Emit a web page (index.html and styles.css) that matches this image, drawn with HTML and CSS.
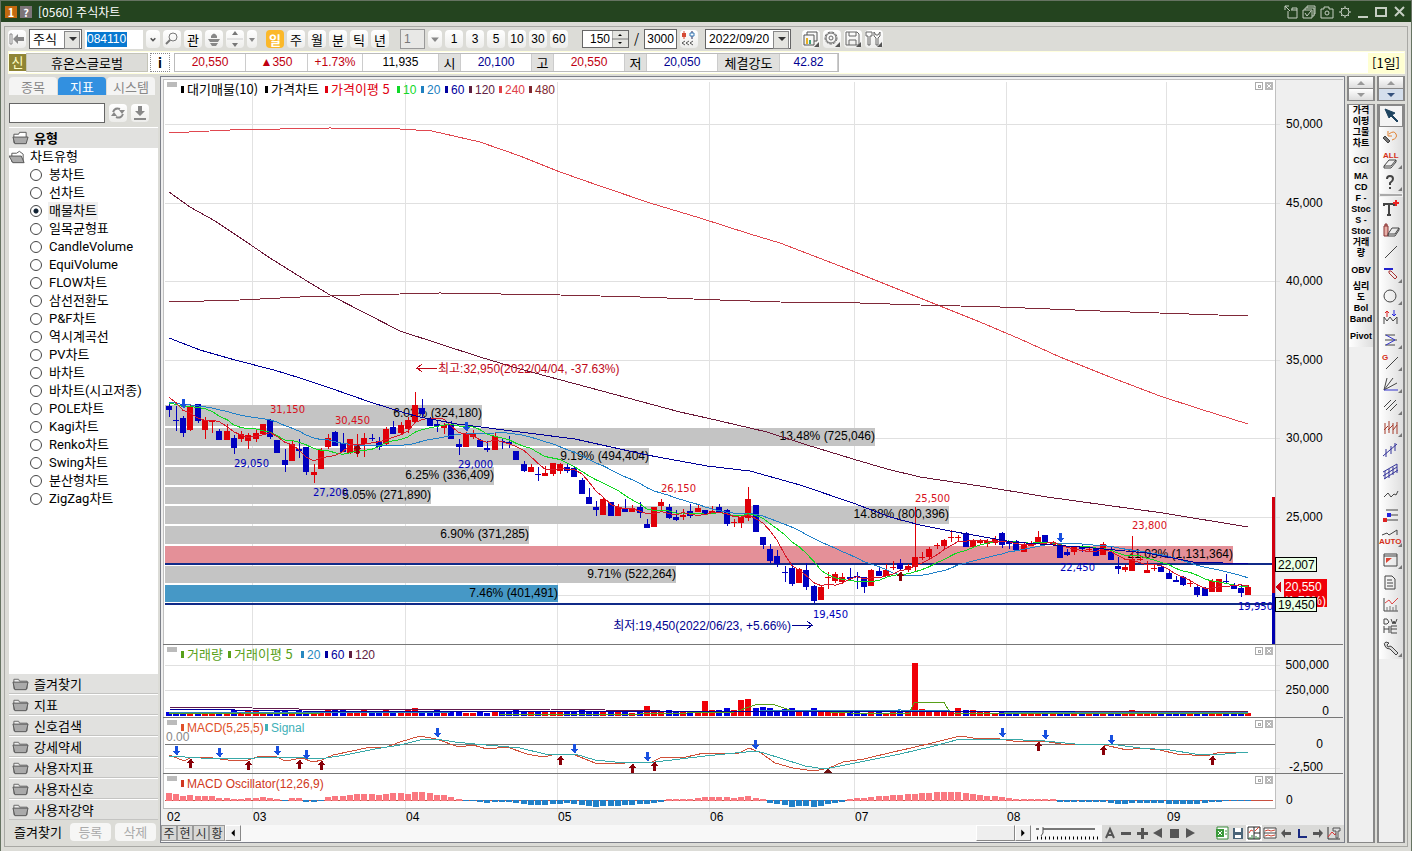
FILE: index.html
```html
<!DOCTYPE html>
<html lang="ko">
<head>
    <meta charset="UTF-8">
    <meta name="viewport" content="width=device-width, initial-scale=1.0">
    <title>[0560] 주식차트</title>
    <link rel="stylesheet" href="styles.css">
</head>
<body>
    <header class="titlebar">
        <span class="badge orange">1</span>
        <span class="badge gray">?</span>
        <h1>[0560] 주식차트</h1>
        <div class="window-icons">
            <svg viewBox="0 0 16 16"><path d="M5 7v7h9V6H8M9 6V4h5v2M2 2l5 5M2 6V2h4"/></svg>
            <svg viewBox="0 0 16 16"><path d="M2 6h9v8H2zM4 6V4h9v8h-2M6 4V2h8v8h-1M4 9l2 3 4-5"/></svg>
            <svg viewBox="0 0 16 16"><path d="M2 5h3V3h5v2h4v9H2z"/><circle cx="8" cy="9" r="2"/></svg>
            <svg viewBox="0 0 16 16"><circle cx="8" cy="8" r="4"/><path d="M8 2v2M8 12v2M2 8h2M12 8h2M4 4l1 1M11 11l1 1M4 12l1-1M11 5l1-1"/></svg>
            <svg viewBox="0 0 16 16" class="thick"><path d="M3 13h10"/></svg>
            <svg viewBox="0 0 16 16" class="thick"><path d="M3 4h10v8H3z"/></svg>
            <svg viewBox="0 0 16 16" class="thick"><path d="M4 3l9 9M13 3l-9 9"/></svg>
        </div>
    </header>

    <div class="window">
        <div class="toolbar">
            <button class="tool" aria-label="처음"><svg viewBox="0 0 18 18"><path d="M2 4h2v10H2z" fill="#fff" stroke="#888"/><path d="M5 9l5-5v3h6v4h-6v3z" fill="#888"/></svg></button>
            <span class="drop market"><select aria-label="시장"><option>주식</option></select></span>
            <span class="code"><input type="text" value="084110" aria-label="종목코드"></span>
            <button class="tool narrow" aria-label="목록"><svg viewBox="0 0 18 18"><path d="M6 8l3 3 3-3" fill="none" stroke="#555" stroke-width="2"/></svg></button>
            <button class="tool" aria-label="검색"><svg viewBox="0 0 18 18"><circle cx="10" cy="7" r="4" fill="none" stroke="#777"/><path d="M7 10l-4 4" stroke="#777" stroke-width="2"/></svg></button>
            <button class="tool">관</button>
            <button class="tool" aria-label="알림"><svg viewBox="0 0 18 18"><path d="M6 6q3-5 6 0v2H6zM3 9h12l-2 3H5zM5 13h8l-2 3H7z" fill="#888"/></svg></button>
            <button class="tool" aria-label="이동"><svg viewBox="0 0 18 18"><path d="M6 5l3-4 3 4zM6 13l3 4 3-4z" fill="#777"/><path d="M1 9h16" stroke="#ccc"/></svg></button>
            <button class="tool tiny" aria-label="더보기"><svg viewBox="0 0 10 18"><path d="M2 8h6l-3 4z" fill="#888"/></svg></button>
            <div class="periods">
                <button class="tool on">일</button>
                <button class="tool">주</button>
                <button class="tool">월</button>
                <button class="tool">분</button>
                <button class="tool">틱</button>
                <button class="tool">년</button>
            </div>
            <input class="unit" type="text" value="1" aria-label="단위" disabled>
            <button class="tool narrow" aria-label="단위 선택"><svg viewBox="0 0 18 18"><path d="M4 7h10l-5 6z" fill="#888"/></svg></button>
            <div class="minutes">
                <button class="tool">1</button>
                <button class="tool">3</button>
                <button class="tool">5</button>
                <button class="tool">10</button>
                <button class="tool">30</button>
                <button class="tool">60</button>
            </div>
            <span class="spin"><input type="text" value="150" aria-label="표시 개수"><svg viewBox="0 0 16 16"><path d="M0 0h16v16H0z" fill="#e4e4e0"/><path d="M0 8h16M0 0v16" stroke="#777"/><path d="M6 5h4l-2-2zM6 11h4l-2 2z" fill="#000"/></svg></span>
            <span class="slash">/</span>
            <input class="total" type="text" value="3000" aria-label="전체 개수">
            <button class="tool" aria-label="봉"><svg viewBox="0 0 18 18"><path d="M4 1v8M12 1v8" stroke="#d54a35"/><path d="M2 3h4v4H2z" fill="#d54a35"/><path d="M12 1v8" stroke="#3578b5"/><path d="M10 3h4v3h-4z" fill="#fff" stroke="#3578b5"/><path d="M5 11l-3 2 3 2M9 11l-3 2 3 2M13 11l-3 2 3 2" fill="none" stroke="#555"/></svg></button>
            <span class="drop date"><select aria-label="날짜"><option>2022/09/20</option></select></span>
            <div class="tools">
                <button class="tool" aria-label="차트 추가"><svg viewBox="0 0 18 18" fill="none" stroke="#555"><path d="M5 5V2h10v9h-3M2 5h10v10H2z"/><path d="M5 8v6" stroke="#e8b020" stroke-width="2"/><path d="M8 10v4" stroke="#40a080" stroke-width="2"/><path d="M17 12v5h-5z" fill="#555" stroke="none"/></svg></button>
                <button class="tool" aria-label="설정"><svg viewBox="0 0 18 18" fill="none" stroke="#666"><circle cx="8" cy="8" r="6" stroke-dasharray="3 1"/><circle cx="8" cy="8" r="5"/><circle cx="8" cy="8" r="2"/><path d="M17 12v5h-5z" fill="#555" stroke="none"/></svg></button>
                <button class="tool" aria-label="저장"><svg viewBox="0 0 18 18" fill="none" stroke="#666"><path d="M2 2h11l2 2v11H2zM5 2v4h7V2M5 15v-5h7v5"/><path d="M17 12v5h-5z" fill="#555" stroke="none"/></svg></button>
                <button class="tool" aria-label="도구"><svg viewBox="0 0 18 18" fill="none" stroke="#666"><path d="M1 2h6v4H5v9H3V6H1zM9 2v4l2 2v7h2V8l2-2V2l-2 3h-2z"/><path d="M17 12v5h-5z" fill="#555" stroke="none"/></svg></button>
            </div>
        </div>

        <div class="quote">
            <span class="new">신</span>
            <button class="name">휴온스글로벌</button>
            <button class="info">i</button>
            <dl class="prices">
                <dd class="red w70">20,550</dd>
                <dd class="red w62">▲350</dd>
                <dd class="red w54">+1.73%</dd>
                <dd class="w76">11,935</dd>
                <dt class="w21">시</dt>
                <dd class="blue w70">20,100</dd>
                <dt class="w21">고</dt>
                <dd class="red w70">20,550</dd>
                <dt class="w21">저</dt>
                <dd class="blue w70">20,050</dd>
                <dt class="w62">체결강도</dt>
                <dd class="blue w59">42.82</dd>
            </dl>
            <span class="daily">[1일]</span>
        </div>

        <main class="main">
            <aside class="sidebar">
                <nav class="tabs">
                    <button>종목</button>
                    <button class="active">지표</button>
                    <button>시스템</button>
                </nav>
                <div class="find">
                    <input type="text" aria-label="지표 검색">
                    <button class="tool" aria-label="새로고침"><svg viewBox="0 0 18 18" fill="none" stroke="#888" stroke-width="2"><path d="M4 8q2-5 7-3M14 10q-2 5-7 3"/><path d="M10 6h6l-3 4zM8 12H2l3-4z" fill="#888" stroke="none"/></svg></button>
                    <button class="tool" aria-label="내려받기"><svg viewBox="0 0 18 18"><path d="M7 2h4v5h3l-5 5-5-5h3zM3 14h12v2H3z" fill="#888"/></svg></button>
                </div>
                <h2 class="group"><svg class="folder" viewBox="0 0 18 14"><path d="M2 12V3h5l1-2h7v11z" fill="#fff" stroke="#555"/><path d="M1 6h16l-2 7H3z" fill="#aaa" stroke="#555"/></svg>유형</h2>
                <div class="list">
                    <div class="root"><svg class="folder" viewBox="0 0 18 14"><path d="M3 12V3h5l3-2 4 3v8z" fill="#fff" stroke="#555"/><path d="M0 6h13l3 7H4z" fill="#aaa" stroke="#555"/></svg>차트유형</div>
                    <label><input type="radio" name="type"><span>봉차트</span></label>
                    <label><input type="radio" name="type"><span>선차트</span></label>
                    <label><input type="radio" name="type" checked><span>매물차트</span></label>
                    <label><input type="radio" name="type"><span>일목균형표</span></label>
                    <label><input type="radio" name="type"><span>CandleVolume</span></label>
                    <label><input type="radio" name="type"><span>EquiVolume</span></label>
                    <label><input type="radio" name="type"><span>FLOW차트</span></label>
                    <label><input type="radio" name="type"><span>삼선전환도</span></label>
                    <label><input type="radio" name="type"><span>P&amp;F차트</span></label>
                    <label><input type="radio" name="type"><span>역시계곡선</span></label>
                    <label><input type="radio" name="type"><span>PV차트</span></label>
                    <label><input type="radio" name="type"><span>바차트</span></label>
                    <label><input type="radio" name="type"><span>바차트(시고저종)</span></label>
                    <label><input type="radio" name="type"><span>POLE차트</span></label>
                    <label><input type="radio" name="type"><span>Kagi차트</span></label>
                    <label><input type="radio" name="type"><span>Renko차트</span></label>
                    <label><input type="radio" name="type"><span>Swing차트</span></label>
                    <label><input type="radio" name="type"><span>분산형차트</span></label>
                    <label><input type="radio" name="type"><span>ZigZag차트</span></label>
                </div>
                <div class="folders">
                    <button><svg class="folder" viewBox="0 0 18 14"><path d="M2 12V2h5l1 2h8v8z" fill="#eee" stroke="#666"/><path d="M1 5h16l-2 8H3z" fill="#aaa" stroke="#555"/></svg>즐겨찾기</button>
                    <button><svg class="folder" viewBox="0 0 18 14"><path d="M2 12V2h5l1 2h8v8z" fill="#eee" stroke="#666"/><path d="M1 5h16l-2 8H3z" fill="#aaa" stroke="#555"/></svg>지표</button>
                    <button><svg class="folder" viewBox="0 0 18 14"><path d="M2 12V2h5l1 2h8v8z" fill="#eee" stroke="#666"/><path d="M1 5h16l-2 8H3z" fill="#aaa" stroke="#555"/></svg>신호검색</button>
                    <button><svg class="folder" viewBox="0 0 18 14"><path d="M2 12V2h5l1 2h8v8z" fill="#eee" stroke="#666"/><path d="M1 5h16l-2 8H3z" fill="#aaa" stroke="#555"/></svg>강세약세</button>
                    <button><svg class="folder" viewBox="0 0 18 14"><path d="M2 12V2h5l1 2h8v8z" fill="#eee" stroke="#666"/><path d="M1 5h16l-2 8H3z" fill="#aaa" stroke="#555"/></svg>사용자지표</button>
                    <button><svg class="folder" viewBox="0 0 18 14"><path d="M2 12V2h5l1 2h8v8z" fill="#eee" stroke="#666"/><path d="M1 5h16l-2 8H3z" fill="#aaa" stroke="#555"/></svg>사용자신호</button>
                    <button><svg class="folder" viewBox="0 0 18 14"><path d="M2 12V2h5l1 2h8v8z" fill="#eee" stroke="#666"/><path d="M1 5h16l-2 8H3z" fill="#aaa" stroke="#555"/></svg>사용자강약</button>
                </div>
                <div class="favorites">
                    <span>즐겨찾기</span>
                    <button disabled>등록</button>
                    <button disabled>삭제</button>
                </div>
            </aside>

            <section class="chart-panel">
                <svg id="chart" viewBox="161 77 1183 748"></svg>
                <div class="chart-footer">
                    <div class="modes">
                        <button>주</button><button>현</button><button>시</button><button>황</button><button class="arrow" aria-label="왼쪽"><svg viewBox="0 0 16 16"><path d="M10 4v8L6 8z"/></svg></button>
                    </div>
                    <div class="track"><span class="thumb"></span></div>
                    <button class="arrow" aria-label="오른쪽"><svg viewBox="0 0 16 16"><path d="M6 4v8l4-4z"/></svg></button>
                    <svg class="scale" viewBox="0 0 64 16"><path d="M1 4h3M8 4h52" stroke="#777" stroke-width="2"/><path d="M8 2v6l-2 3" stroke="#555" fill="none"/><path d="M2 13h61" stroke="#000" stroke-width="3" stroke-dasharray="1 3"/></svg>
                    <div class="controls">
                        <button aria-label="글자"><svg viewBox="0 0 16 16"><path d="M4 13l4-9 4 9M6 10h4" fill="none" stroke="#555" stroke-width="2"/></svg></button>
                        <button aria-label="축소"><svg viewBox="0 0 16 16"><path d="M3 7h10v3H3z"/></svg></button>
                        <button aria-label="확대"><svg viewBox="0 0 16 16"><path d="M3 7h4V3h3v4h4v3h-4v4H7v-4H3z"/></svg></button>
                        <button aria-label="뒤로"><svg viewBox="0 0 16 16"><path d="M12 3v10L3 8z"/></svg></button>
                        <button aria-label="정지"><svg viewBox="0 0 16 16"><path d="M4 4h9v9H4z"/></svg></button>
                        <button aria-label="재생"><svg viewBox="0 0 16 16"><path d="M4 3v10l9-5z"/></svg></button>
                    </div>
                    <div class="controls end">
                        <button aria-label="엑셀"><svg viewBox="0 0 16 16"><path d="M3 2h11v12H3z" fill="#fff" stroke="#3a8a3a"/><path d="M2 4h8v8H2z" fill="#3a9a3a"/><path d="M4 6l4 4M8 6l-4 4" stroke="#fff"/><path d="M11 6h2M11 9h2" stroke="#3a8a3a"/></svg></button>
                        <button aria-label="저장"><svg viewBox="0 0 16 16"><path d="M3 3h10v11H3z" fill="#4a6478"/><path d="M5 3h6v4H5zM5 10h6v3H5z" fill="#fff"/></svg></button>
                        <button class="pressed" aria-label="차트"><svg viewBox="0 0 16 16" fill="none"><path d="M2 2h12v12H2zM8 2v12M8 8h6" stroke="#222"/><path d="M3 8l2-3 2 1M9 6l4-4" stroke="#d43"/><path d="M4 12v2M6 10v4M10 11v3M12 12v2" stroke="#297a35"/></svg></button>
                        <button aria-label="분할"><svg viewBox="0 0 16 16"><path d="M2 3h12v10H2zM2 8h12" fill="#fff" stroke="#444"/><path d="M3 6l3-1 3 1 4-1M3 11l3-1 3 1 4-1" fill="none" stroke="#c43"/></svg></button>
                        <button aria-label="이전"><svg viewBox="0 0 16 16"><path d="M3 8l4-4v3h6v3H7v3z"/></svg></button>
                        <button aria-label="로그"><svg viewBox="0 0 16 16"><path d="M5 4v8h8" fill="none" stroke="#1a2a80" stroke-width="2"/></svg></button>
                        <button aria-label="다음"><svg viewBox="0 0 16 16"><path d="M13 8L9 4v3H3v3h6v3z"/></svg></button>
                        <button aria-label="도구"><svg viewBox="0 0 16 16"><path d="M2 2v12h12" fill="none" stroke="#333"/><path d="M2 12l4-5 3 3 4-7" fill="none" stroke="#d33"/><path d="M7 3h7v3h-2v7h-2V6H7z" fill="#ddd" stroke="#555"/></svg></button>
                    </div>
                </div>
            </section>

            <aside class="strip">
                <div class="pager"><button aria-label="위"><svg viewBox="0 0 24 10"><path d="M8 7h8l-4-4z"/></svg></button><button aria-label="아래"><svg viewBox="0 0 24 10"><path d="M8 3h8l-4 4z"/></svg></button></div>
                <div class="shelf names">
                    <button>가격<br>이평</button>
                    <button>그물<br>차트</button>
                    <button>CCI</button>
                    <button>MA<br>CD</button>
                    <button>F -<br>Stoc</button>
                    <button>S -<br>Stoc</button>
                    <button>거래<br>량</button>
                    <button>OBV</button>
                    <button>심리<br>도</button>
                    <button>Bol<br>Band</button>
                    <button>Pivot</button>
                </div>
            </aside>

            <aside class="strip">
                <div class="pager"><button aria-label="위"><svg viewBox="0 0 24 10"><path d="M8 7h8l-4-4z"/></svg></button><button class="blue-arrow" aria-label="아래"><svg viewBox="0 0 24 10"><path d="M8 3h8l-4 4z"/></svg></button></div>
                <div class="shelf icons">
                    <button class="current" aria-label="선택"><svg viewBox="0 0 24 20"><path d="M5 3l4 9 2-2 6 6 1-1-6-6 3-2z" fill="#1f4460" stroke="#1f4460"/></svg></button>
                    <button aria-label="되돌리기"><svg viewBox="0 0 24 20"><path d="M10 6q5-4 7 0t-4 6M9 3v5h4" stroke="#e08030"/><path d="M4 10l5 5 2-2-5-5z" fill="#777" stroke="#444"/></svg></button>
                    <button class="more" aria-label="모두 지우기"><svg viewBox="0 0 24 20"><text x="4" y="8">ALL</text><path d="M5 16l5-6h7l-5 6zM5 16v2h7l5-6v-2"/></svg></button>
                    <button class="more" aria-label="도움말"><svg viewBox="0 0 24 20"><path d="M8 7q0-3 3-3t3 3q0 2-3 4v2M11 15v2" stroke-width="2"/></svg></button>
                    <hr>
                    <button aria-label="글자"><svg viewBox="0 0 24 20"><path d="M5 8V6h10v2M10 6v11M8 17h4" stroke-width="2"/><path d="M17 2v6M14 5h6" stroke="#e22" stroke-width="2"/></svg></button>
                    <button aria-label="지우개"><svg viewBox="0 0 24 20"><path d="M5 6h4v10H5zM6 6V4h2v2" fill="#e8b0a8" stroke="#833"/><path d="M9 14l4-6h7l-4 6zM9 14v2h7l4-6V8"/></svg></button>
                    <button aria-label="직선"><svg viewBox="0 0 24 20"><path d="M6 16L18 4"/></svg></button>
                    <button class="more" aria-label="수평선"><svg viewBox="0 0 24 20"><path d="M5 5h9" stroke="#22c" stroke-width="2"/><path d="M12 7l6 6M10 9l6 6M10 9V7h2M16 15l2-2" stroke="#a33"/></svg></button>
                    <button class="more" aria-label="원"><svg viewBox="0 0 24 20"><circle cx="11" cy="10" r="6"/></svg></button>
                    <button aria-label="고저"><svg viewBox="0 0 24 20"><path d="M5 16V9l3 4 3-4 3 4 4-4v7"/><path d="M8 9V3M6 5l2-2 2 2" stroke="#d22"/><path d="M15 2v6M13 6l2 2 2-2" stroke="#22d"/></svg></button>
                    <button class="more" aria-label="추세"><svg viewBox="0 0 24 20"><path d="M6 5h10M6 10h12M6 15h10"/><path d="M7 5l9 5-9 5" stroke="#33c"/></svg></button>
                    <button class="more" aria-label="각도"><svg viewBox="0 0 24 20"><text x="3" y="8">G</text><path d="M7 17L19 5"/></svg></button>
                    <button class="more" aria-label="부채"><svg viewBox="0 0 24 20"><path d="M5 16L8 4M5 16L14 4M5 16L18 9"/><path d="M5 16h14" stroke="#33c"/></svg></button>
                    <button class="more" aria-label="평행"><svg viewBox="0 0 24 20"><path d="M5 11l7-7M7 14L17 4M11 15l7-7"/></svg></button>
                    <button class="more" aria-label="주기"><svg viewBox="0 0 24 20"><path d="M6 5v11M10 3v12M14 5v11M18 4v12M5 12l4-4M9 12l5-5M14 12l4-5" stroke="#a43a2a"/></svg></button>
                    <button aria-label="채널"><svg viewBox="0 0 24 20"><path d="M4 16L18 4M7 9v8M12 6v8M16 3v8" stroke="#339"/></svg></button>
                    <button aria-label="이중 채널"><svg viewBox="0 0 24 20"><path d="M4 10L18 2M4 14L18 5M5 17L19 8M6 9v8M10 7v9M14 5v8M18 2v9" stroke="#339"/></svg></button>
                    <button aria-label="파동"><svg viewBox="0 0 24 20"><path d="M5 13l4-4 3 4 3-3 2 1 2-4"/></svg></button>
                    <button aria-label="구간"><svg viewBox="0 0 24 20"><path d="M7 4h12M12 9h7M7 14h12"/><path d="M8 7h4v4H8z" fill="#22d" stroke="none"/><path d="M4 12h4v4H4z" fill="#d22" stroke="none"/></svg></button>
                    <button class="more" aria-label="자동"><svg viewBox="0 0 24 20"><path d="M3 7l5-2 2 2 8-5v5"/><text x="0" y="16">AUTO</text></svg></button>
                    <button class="more" aria-label="창"><svg viewBox="0 0 24 20"><path d="M5 4h13v12H5zM5 6h13"/><path d="M7 8h6l-6 5z" fill="#d43" stroke="none"/></svg></button>
                    <button aria-label="문서"><svg viewBox="0 0 24 20"><path d="M6 4h7l3 3v10H6zM8 8h5M8 11h6M8 14h6"/></svg></button>
                    <button aria-label="통계"><svg viewBox="0 0 24 20"><path d="M5 4v13h14"/><path d="M6 9l4-3 3 4 6-6" stroke="#d44"/><path d="M8 17v-4M11 17v-5M14 17v-4M17 17v-6" stroke="#777"/></svg></button>
                    <button aria-label="주기 변환"><svg viewBox="0 0 24 20"><path d="M5 3v5h3l2-2-2-3zM12 3l2 5 1-3 1 3 2-5M5 10v7M10 10v7M5 13h5M12 10h6M12 10v7h6M12 13h6"/></svg></button>
                    <button class="more" aria-label="환경"><svg viewBox="0 0 24 20"><path d="M6 8q-2-3 1-4l3 1-2 2 1 2 2-1 2 1 6 6-2 2-6-6q-4 0-5-3z" fill="#ddd"/></svg></button>
                </div>
            </aside>
        </main>
    </div>
    <script src="script.js"></script>
</body>
</html>
```
FILE: styles.css
```css
* {
    margin: 0;
    padding: 0;
    box-sizing: border-box;
}

body {
    min-height: 100vh;
    display: flex;
    flex-direction: column;
    background: #dcdcd7;
    border: 1px solid #667362;
    border-bottom: 2px solid #6c6c6a;
    font: 13px/16px "Noto Sans CJK KR", sans-serif;
    color: #000;
}

button, input, select {
    font: inherit;
    color: inherit;
    border: none;
    border-radius: 0;
    background: none;
}

svg {
    display: block;
    overflow: hidden;
}

/* numbers are set a little tighter than the labels */
.code input, .unit, .spin input, .total, .date select, .minutes .tool, .prices dd {
    font-family: "Liberation Sans", "Noto Sans CJK KR", sans-serif;
    font-size: 12px;
}

/* title bar */
.titlebar {
    height: 21px;
    display: flex;
    align-items: center;
    gap: 3px;
    padding: 0 4px;
    background: #24441f;
    color: #fff;
}

.titlebar h1 {
    font-size: 12px;
    font-weight: normal;
    padding-left: 3px;
}

.badge {
    width: 12px;
    height: 12px;
    line-height: 12px;
    font-size: 11px;
    font-weight: bold;
    text-align: center;
}

.orange { background: #c36a10; }
.gray { background: #7c7478; }

.window-icons {
    display: flex;
    gap: 2px;
    margin-left: auto;
}

.window-icons svg {
    width: 16px;
    height: 16px;
    fill: none;
    stroke: #c5cec2;
}

.window-icons .thick { stroke-width: 2; }

.window {
    flex: 1;
    display: flex;
    flex-direction: column;
    margin: 4px 3px;
    border: 1px solid #a8a8a4;
}

/* toolbar */
.toolbar {
    height: 24px;
    display: flex;
    align-items: center;
    gap: 3px;
    padding: 0 3px;
}

.tool {
    flex: none;
    width: 18px;
    height: 18px;
    line-height: 17px;
    text-align: center;
    background: linear-gradient(#fff, #ededeb);
    border-radius: 4px;
}

.tool svg {
    width: 100%;
    height: 18px;
}

.tool.narrow { width: 14px; }
.tool.tiny { width: 10px; }

.tool.on {
    background: #fbb829;
    color: #fff;
    font-weight: bold;
}

.drop {
    position: relative;
    height: 20px;
    background: #fff;
    border: 1px solid #666;
}

.drop select {
    appearance: none;
    display: block;
    width: 100%;
    height: 18px;
    padding-left: 3px;
}

.drop::before {
    content: "";
    position: absolute;
    right: 1px;
    top: 1px;
    width: 14px;
    height: 16px;
    background: #e4e4e0;
    border: 1px solid #888;
    pointer-events: none;
}

.drop::after {
    content: "";
    position: absolute;
    right: 4px;
    top: 7px;
    border: 4px solid transparent;
    border-top-color: #333;
    border-bottom: none;
    pointer-events: none;
}

.market { width: 53px; }
.date { width: 86px; margin-left: 4px; }

.code {
    width: 58px;
    height: 19px;
    padding: 2px;
    background: #fff;
}

.code input {
    display: block;
    width: 40px;
    height: 15px;
    background: #0878d0;
    color: #fff;
}

.periods, .minutes, .tools {
    display: flex;
    gap: 3px;
}

.periods { padding-left: 6px; }
.tools { padding-left: 8px; }

.unit {
    width: 25px;
    height: 20px;
    margin-left: 8px;
    padding-left: 3px;
    border: 1px solid #999;
    background: #e8e8e6;
    color: #777;
}

.spin {
    display: flex;
    width: 47px;
    height: 18px;
    margin-left: 11px;
    border: 1px solid #666;
    background: #fff;
}

.spin input {
    width: 29px;
    text-align: right;
    padding-right: 2px;
}

.spin svg {
    width: 16px;
    height: 16px;
}

.slash { padding: 0 2px; }

.total {
    width: 33px;
    height: 20px;
    text-align: center;
    background: #fff;
    border: 1px solid #666;
}

/* quote line */
.quote {
    height: 23px;
    display: flex;
    align-items: center;
    margin: 0 2px 2px 3px;
    background: #fff;
    border: 1px solid #ffffdd;
}

.new {
    width: 17px;
    height: 17px;
    text-align: center;
    background: #8f8535;
    color: #ffffc8;
}

.name {
    width: 122px;
    height: 19px;
    background: #dcdcd8;
    border: 1px solid #c4c4b8;
}

.info {
    width: 20px;
    height: 19px;
    margin: 0 4px 0 2px;
    font-weight: bold;
    border: 1px dotted #888;
}

.prices {
    display: flex;
    border: 1px solid #bbb;
}

.prices dd, .prices dt {
    height: 17px;
    line-height: 17px;
    text-align: center;
    border-right: 1px solid #ccc;
}

.prices dt { background: #e0e0de; }
.w21 { width: 22px; }
.w54 { width: 55px; }
.w59 { width: 58px; }
.w62 { width: 62px; }
.w70 { width: 71px; }
.w76 { width: 76px; }
.red { color: #c00010; }
.blue { color: #000090; }

.daily {
    margin-left: auto;
    padding: 2px 4px;
    background: #ffffd2;
}

/* main columns */
.main {
    flex: 1;
    display: grid;
    grid-template-columns: 149px 1fr 28px 28px;
    gap: 2px;
    padding: 0 2px 3px 4px;
}

.sidebar {
    display: flex;
    flex-direction: column;
}

.tabs {
    display: flex;
    gap: 1px;
    padding-top: 1px;
}

.tabs button {
    width: 48px;
    height: 18px;
    line-height: 17px;
    background: #f4f4f3;
    border-radius: 4px 4px 0 0;
    color: #888;
}

.tabs .active {
    background: #3290e0;
    color: #fff;
}

.find {
    display: flex;
    align-items: center;
    gap: 4px;
    padding: 8px 0 4px;
}

.find input {
    width: 96px;
    height: 20px;
    background: #fff;
    border: 1px solid #666;
}

.group {
    display: flex;
    align-items: center;
    gap: 5px;
    height: 21px;
    padding-left: 3px;
    font-size: 13px;
    background: #e1e1df;
    border-top: 1px solid #fff;
}

.folder {
    flex: none;
    width: 17px;
    height: 14px;
}

.list {
    flex: 1;
    background: #fff;
    font-family: Roboto, "Noto Sans CJK KR", sans-serif;
    line-height: 18px;
}

.root {
    display: flex;
    align-items: center;
    gap: 4px;
}

.list label {
    display: flex;
    align-items: center;
    gap: 6px;
    height: 18px;
    padding-left: 21px;
}

.list span { padding: 0 1px; }

.list input {
    appearance: none;
    width: 12px;
    height: 12px;
    border: 1px solid #444;
    border-radius: 50%;
}

.list input:checked { background: radial-gradient(circle, #123 2px, #fff 3px); }
.list input:checked + span { background: #efefef; }

.folders button {
    display: flex;
    align-items: center;
    gap: 5px;
    width: 100%;
    height: 21px;
    padding-left: 3px;
    background: #e1e1df;
    border-top: 1px solid #fff;
    border-bottom: 1px solid #c4c4c2;
}

.favorites {
    display: flex;
    align-items: center;
    gap: 4px;
    height: 23px;
    padding-left: 5px;
}

.favorites span { margin-right: 4px; }

.favorites button {
    width: 41px;
    height: 18px;
    line-height: 17px;
    background: #f6f6f5;
    border-radius: 4px;
    color: #aaa;
}

/* chart */
.chart-panel {
    border: 1px solid #7c7f88;
    background: #f8f8f8;
    align-self: start;
}

#chart {
    width: 100%;
    height: auto;
    shape-rendering: crispEdges;
}

.chart-footer {
    display: flex;
    height: 17px;
}

.modes { display: flex; }

.modes button {
    width: 16px;
    height: 16px;
    line-height: 14px;
    background: #d8d8d6;
    border: 1px solid #999;
    color: #333;
}

.modes button:not(.arrow) { font-size: 12px; }

.chart-footer .arrow {
    width: 16px;
    height: 16px;
    background: #f0f0f0;
    border: 1px solid #888;
    border-top-color: #fff;
    border-left-color: #fff;
}

.arrow svg { width: 14px; height: 14px; }

.track {
    flex: 1;
    display: flex;
    justify-content: flex-end;
}

.thumb {
    width: 39px;
    height: 16px;
    background: #eee;
    border: 1px solid #888;
    border-top-color: #fff;
    border-left-color: #fff;
}

.scale {
    width: 64px;
    height: 16px;
    margin: 0 3px 0 4px;
}

.controls {
    display: flex;
    background: #dadad8;
    fill: #555;
}

.controls button {
    width: 16px;
    height: 16px;
}

.controls .pressed { background: #fff; }
.controls svg { width: 16px; height: 16px; }
.controls.end { padding: 0 2px 0 16px; }

/* right strips */
.strip {
    display: flex;
    flex-direction: column;
    gap: 3px;
}

.pager, .shelf {
    border: 1px solid #888;
    border-width: 1px 2px;
}

.pager button {
    display: block;
    width: 100%;
    height: 11px;
    background: linear-gradient(#fff, #ddd);
    fill: #999;
}

.pager button + button {
    height: 12px;
    border-top: 1px solid #888;
}

.pager .blue-arrow { background: #d5dfec; fill: #34517c; }
.pager svg { width: 24px; height: 10px; }

.shelf {
    flex: 1;
    background: #efefef;
}

.shelf button {
    display: block;
    position: relative;
    width: 100%;
    height: 22px;
    background: linear-gradient(90deg, #fff, #dedede);
}

.names button {
    font: bold 9px/11px "Liberation Sans", "Noto Sans CJK KR", sans-serif;
}

.icons svg {
    width: 24px;
    height: 20px;
    fill: none;
    stroke: #444;
    overflow: visible;
}

.icons text {
    fill: #d33018;
    stroke: none;
    font: bold 8px "Liberation Sans", sans-serif;
}

.icons .current { border: 1px solid #888; background: #f4f4f4; }
.icons hr { border: none; border-top: 2px solid #aaa; margin: 1px; }

.more::after {
    content: "";
    position: absolute;
    right: 1px;
    bottom: 2px;
    border: 2px solid #777;
    border-top-color: transparent;
    border-left-color: transparent;
}

/* svg text */
#chart text { font-size: 13px; }

#chart .num {
    font-family: "Liberation Sans", "Noto Sans CJK KR", sans-serif;
    font-size: 12px;
}

#chart .mark {
    font-family: "DejaVu Sans", sans-serif;
    font-size: 10px;
}

#chart .line { fill: none; stroke-width: 1; }
```
FILE: script.js
```javascript
const NS = 'http://www.w3.org/2000/svg';
const chart = document.getElementById('chart');
const RED = '#e00008', BLUE = '#0000c0';
const LEFT = 165, RIGHT = 1275;

function add(tag, attrs, text) {
    const el = document.createElementNS(NS, tag);
    for (const key in attrs) el.setAttribute(key, attrs[key]);
    if (text) el.textContent = text;
    chart.appendChild(el);
}
const rect = (x, y, width, height, fill) => add('rect', { x, y, width, height, fill });
const line = (points, stroke) => add('polyline', { points, stroke, class: 'line' });
const label = (x, y, text, fill = '#000', anchor = 'start', cls = 'num') =>
    add('text', { x, y, fill, 'text-anchor': anchor, class: cls }, text);
const xAt = i => Math.round(168.7 + i * 7.245);

// one entry per day: direction, high, body top, body bottom, low
const candles = `b404,406,410,417 b406,420,421,431 b416,418,433,437 r405,406,430,431 b404,404,421,423 r417,420,430,439 r420,421,422,433 b429,431,440,440 r424,431,440,440 b435,438,448,454
r431,434,439,442 r433,435,441,449 r430,433,439,442 r424,424,434,435 b419,420,437,439 b440,440,453,453 b449,460,465,472 r440,444,461,461 b439,449,451,458 b447,447,472,475
r464,472,475,483 r448,450,469,469 r434,438,447,449 b431,432,446,446 b433,443,452,452 r439,439,453,454 r434,446,453,457 r433,438,444,457 b434,438,439,441 b437,441,447,450
r427,429,444,446 b421,427,434,434 r422,425,433,434 r417,420,429,433 r392,405,422,423 b399,408,414,417 b417,418,426,426 b420,424,426,432 r423,425,428,434 b421,425,439,439
b439,444,447,455 r432,433,447,447 r430,434,437,439 b439,440,447,447 b441,448,450,452 r433,436,450,450 b439,441,442,449 b436,442,444,448 b451,451,460,460 b461,464,471,472
r464,467,472,472 b467,474,475,481 r466,473,476,476 r463,463,474,476 r463,464,471,474 b463,467,471,473 b467,468,477,477 b478,480,494,494 b488,497,504,504 b501,507,510,516
r497,499,515,515 b502,502,516,516 r504,507,516,516 b499,509,512,512 r505,508,512,512 b502,507,513,518 b519,524,528,528 r507,507,527,527 r499,502,506,510 b504,507,518,519
b510,517,520,521 r509,515,517,520 b504,511,516,518 r505,508,512,512 b510,510,514,514 r506,511,514,514 b504,507,512,512 b509,510,524,526 r519,522,523,527 r515,517,523,528
r487,499,518,521 b505,505,532,532 b537,537,545,549 b544,549,561,563 b550,556,564,567 b566,572,573,582 b564,568,584,586 r568,569,583,583 b563,570,587,590 b585,586,601,603
r585,587,600,600 r572,577,578,589 r572,574,581,583 r573,577,582,584 b568,577,579,580 b572,576,577,589 b577,577,587,593 r569,570,586,586 b566,571,576,576 r564,570,576,576
r561,567,568,570 b559,563,569,570 r564,566,570,572 r507,557,567,571 r552,557,558,560 r547,549,557,560 r543,545,546,549 r539,540,546,549 r530,537,538,542 r535,537,538,541
b532,533,547,547 r539,540,547,547 r539,540,543,545 r539,541,544,547 r536,539,543,545 b532,533,545,548 b541,542,544,549 b540,541,550,550 r543,544,552,552 r541,543,546,546
r531,537,542,542 b535,535,543,543 r541,543,545,545 b545,546,558,558 b549,552,555,556 r547,547,552,555 b544,547,549,552 r547,549,550,552 b548,549,556,556 r542,544,555,555
b547,552,560,560 b557,566,569,574 r565,567,570,572 r536,559,571,571 r555,559,560,561 r561,570,573,573 r565,568,569,571 b566,567,572,572 b570,573,579,579 b576,580,582,582
b576,577,585,586 r580,583,584,587 b585,587,595,597 b587,588,596,596 r579,581,592,592 r579,579,592,592 b574,581,582,584 b583,585,589,589 b584,588,593,597 r585,587,595,595`
    .split(/\s+/).map(s => ({ up: s[0] === 'r', v: s.slice(1).split(',').map(Number) }));

// plot area
rect(161, 77, 1183, 748, '#efefef');
rect(163, 79, 1112, 729, '#fff');
[124, 203, 281, 360, 438, 517, 595, 665, 690, 768].forEach(y => rect(LEFT, y, 1115, 1, '#e0e0e0'));
[252, 405, 557, 709, 854, 1006, 1166].forEach(x => rect(x, 82, 1, 730, '#e2e2e2'));
rect(1275, 79, 1, 730, '#c0c0c0');
rect(163, 79, 1, 730, '#c0c0c0');
rect(163, 79, 1180, 1, '#c0c0c0');
rect(163, 808, 1113, 1, '#b8b8b8');
[644, 717, 773].forEach(y => rect(163, y, 1180, 1, '#777'));

// volume by price
const zones = [
    [405, 21, 482, '6.02% (324,180)'], [428, 18, 875, '13.48% (725,046)'], [448, 17, 649, '9.19% (494,404)'],
    [467, 18, 494, '6.25% (336,409)'], [487, 17, 431, '5.05% (271,890)'], [506, 18, 949, '14.88% (800,396)'],
    [526, 18, 529, '6.90% (371,285)'], [546, 17, 1233, '21.03% (1,131,364)'], [566, 17, 676, '9.71% (522,264)'],
    [585, 17, 558, '7.46% (401,491)']
];
zones.forEach(([y, h, end], i) => rect(LEFT, y, end - LEFT, h, i === 7 ? '#e49098' : i === 9 ? '#4698c6' : '#c4c4c4'));
zones.forEach(([y, h, end, text]) => label(end, y + 12, text, '#000', 'end'));
rect(LEFT, 563, RIGHT - LEFT, 2, '#102a88');
rect(LEFT, 603, RIGHT - LEFT, 2, '#102a88');

candles.forEach(({ up, v: [high, top, bottom, low] }, i) => {
    const color = up ? RED : BLUE;
    rect(xAt(i), high, 1, Math.max(low - high, 1), color);
    rect(xAt(i) - 3, top, 6, Math.max(bottom - top, 1), color);
});

// short averages come from the closes, the long ones start before the first day
const closes = [...Array(10).fill(401), ...Array(5).fill(409), ...Array(4).fill(394),
    ...candles.map(c => c.up ? c.v[1] : c.v[2])];
function average(period, color) {
    const points = candles.map((c, i) => {
        const part = closes.slice(i + 20 - period, i + 20);
        return xAt(i) + ',' + (part.reduce((a, b) => a + b) / period).toFixed(1);
    });
    line(points.join(' '), color);
}
average(20, '#2080c8');
average(10, '#10d820');
average(5, '#d81828');
line('169,338 200,350 235,360 274,370 300,378 330,388 350,395 370,402 405,413 420,417 457,424 520,432 575,439 647,455 707,466 750,471 800,485 853,503 890,517 920,525 950,531 1013,542 1093,548 1147,553 1193,562 1223,563 1248,563', '#000098');
line('169,192 190,207 215,221 242,239 270,258 302,278 330,295 365,313 400,331 440,344 480,357 520,369 587,387 680,412 707,418 767,432 807,445 853,459 887,469 920,477 980,486 1047,497 1163,513 1248,527', '#6a1838');
line('169,133 230,130 330,128 400,129 432,131 480,142 520,156 560,172 600,186 650,203 700,218 750,234 780,243 840,266 880,282 930,302 980,322 1020,339 1060,357 1110,377 1160,396 1200,409 1248,424', '#e04850');
line('169,302 240,300 300,297 360,295 440,293 560,295 640,297 720,300 780,302 860,303 920,305 1000,307 1100,311 1248,316', '#802838');

// swing marks
[[270, 413, '31,150'], [335, 424, '30,450'], [661, 492, '26,150'], [915, 502, '25,500'], [1132, 529, '23,800']]
    .forEach(([x, y, t]) => label(x, y, t, '#d81020', 'start', 'mark'));
[[234, 467, '29,050'], [313, 496, '27,200'], [458, 468, '29,000'], [813, 618, '19,450'], [1060, 571, '22,450'], [1238, 610, '19,950']]
    .forEach(([x, y, t]) => label(x, y, t, '#0000b8', 'start', 'mark'));
label(438, 373, '최고:32,950(2022/04/04, -37.63%)', '#c00818');
line('437,368 417,368 422,364 417,368 422,372', '#c00818');
label(791, 630, '최저:19,450(2022/06/23, +5.66%)', '#000090', 'end');
line('792,625 812,625 807,621 812,625 807,629', '#000090');

// volume
const volumes = [4, 4, 4, 4, 4, 4, 4, 4, 4, 6, 4, 5, 5, 4, 4, 5, 6, 4, 6, 5, 5, 4, 6, 6, 7, 5, 5, 6, 4, 5,
    6, 5, 4, 6, 8, 5, 5, 6, 4, 4, 4, 3, 3, 4, 3, 4, 4, 4, 6, 4, 4, 4, 5, 4, 5, 4, 4, 7, 4, 4,
    4, 4, 4, 4, 3, 6, 10, 6, 5, 6, 4, 4, 3, 4, 15, 6, 6, 8, 6, 16, 17, 8, 9, 8, 6, 7, 8, 4, 4, 8,
    5, 5, 4, 4, 4, 4, 3, 4, 4, 3, 4, 4, 5, 53, 7, 5, 5, 5, 5, 8, 6, 6, 4, 4, 3, 4, 3, 4, 4, 3,
    4, 3, 3, 4, 4, 3, 4, 4, 3, 4, 4, 5, 4, 6, 4, 3, 4, 3, 3, 4, 3, 4, 4, 3, 3, 4, 3, 3, 4, 3];
volumes.forEach((h, i) => rect(xAt(i) - 3, 716 - h, 6, h, candles[i].up || h >= 10 ? '#f00008' : '#0000e0'));
line('169,714 240,713 320,714 500,714 640,714 735,712 755,705 772,704 790,710 850,713 909,714 914,703 944,702 950,713 1248,714', '#58a018');
line('169,712 300,713 450,712 760,711 900,710 1000,712 1248,713', '#2888c0');
line('169,709 300,711 600,712 900,711 1248,712', '#000098');
line('169,707 252,708 345,710 550,709 660,711 1075,711 1248,712', '#60184c');

// macd
rect(LEFT, 744, RIGHT - LEFT, 1, '#777');
label(166, 741, '0.00', '#888');
line('169,755 177,758 184,761 192,757 213,758 235,761 248,760 260,756 275,756 285,761 302,758 313,762 322,760 333,755 357,750 370,747 387,747 400,742 420,736 436,739 459,747 473,745 487,749 507,747 527,754 543,757 557,754 575,755 595,763 614,764 636,762 650,763 662,757 686,757 704,753 739,753 749,748 761,753 775,763 793,768 814,771 829,768 843,762 864,759 893,752 911,748 936,742 960,736 973,738 1000,739 1013,741 1043,741 1067,745 1100,744 1127,750 1140,748 1160,750 1177,754 1207,756 1220,752 1248,753', '#d05038');
line('169,756 200,758 245,759 265,757 290,757 320,759 345,755 375,749 400,745 420,740 436,739 455,742 475,744 520,748 545,754 575,754 595,760 625,763 655,762 680,759 705,756 735,753 757,751 780,758 805,766 825,769 850,764 875,759 900,754 930,747 960,739 1000,739 1045,741 1075,744 1110,744 1140,748 1170,750 1195,754 1225,754 1248,752', '#38a8a8');

[[183, 404], [466, 427], [1060, 538], [176, 751], [219, 753], [277, 751], [306, 755], [437, 733], [574, 749], [647, 757], [755, 745], [1002, 733], [1045, 735], [1111, 740]]
    .forEach(([x, y]) => add('path', { d: `M${x - 1} ${y - 5}h3v5h2l-3 5l-4-5h2z`, fill: '#1850e0' }));
[[357, 449], [900, 576], [190, 763], [248, 765], [299, 764], [321, 765], [560, 760], [632, 768], [654, 766], [1038, 746], [1103, 750], [1212, 760]]
    .forEach(([x, y]) => add('path', { d: `M${x - 1} ${y + 5}h3v-5h2l-3-5l-4 5h2z`, fill: '#880008' }));
add('path', { d: 'M824 773l4-5 4 5z', fill: '#701010' });

// oscillator
const osc = [7, 6, 4, 5, 4, 4, 4, 2, 2, 1, 1, 2, 2, 3, 2, 1, 0, 2, 2, -1, -1, 0, 3, 4, 4, 5, 6, 6, 6, 5,
    6, 7, 7, 6, 8, 8, 7, 5, 5, 3, 1, 0, 0, -1, -2, -1, -1, -1, -2, -3, -4, -4, -4, -3, -3, -2, -3, -4, -5, -6,
    -5, -5, -5, -4, -4, -3, -3, -2, -1, 1, 1, 1, 1, 2, 3, 3, 3, 3, 2, 3, 4, 2, 1, -2, -3, -4, -6, -5, -5, -6,
    -5, -3, -2, -1, 1, 2, 2, 3, 4, 4, 5, 5, 6, 6, 7, 7, 8, 8, 8, 8, 7, 6, 5, 4, 4, 3, 2, 1, 1, 1,
    1, 1, 1, -1, -1, -1, -1, -1, -1, -1, -2, -3, -3, -2, -2, -2, -2, -2, -3, -3, -3, -3, -3, -2, -1, -1, 0, 0, 0, 0];
rect(LEFT, 800, RIGHT - LEFT - 2, 1, '#c85040');
osc.forEach((h, i) => rect(xAt(i) - 3, h > 0 ? 800 - h : 800, 6, Math.abs(h) + 1, h > 0 ? '#fa7880' : '#2080c8'));

// legends
function legend(y, items) {
    rect(167, y - 7, 10, 5, '#bbb');
    items.forEach(([x, text, color]) => {
        rect(x, y - 3, 3, 7, color);
        label(x + 6, y + 5, text, color, 'start', /[가-힣]/.test(text) ? '' : 'num');
    });
}
legend(89, [[181, '대기매물(10)', '#000'], [265, '가격차트', '#000'], [325, '가격이평 5', '#e00010'], [397, '10', '#10d828'],
    [421, '20', '#2080c0'], [445, '60', '#0000a0'], [469, '120', '#602040'], [499, '240', '#e04048'], [529, '480', '#802830']]);
legend(654, [[181, '거래량', '#58a018'], [228, '거래이평 5', '#58a018'], [301, '20', '#2888c0'], [325, '60', '#0000a0'], [349, '120', '#602040']]);
legend(727, [[181, 'MACD(5,25,5)', '#e05028'], [265, 'Signal', '#40b0b8']]);
legend(783, [[181, 'MACD Oscillator(12,26,9)', '#d03820']]);
[86, 651, 724, 780].forEach(y => {
    add('path', { d: `M1255.5 ${y - 3.5}h7v7h-7zM1258 ${y - 1}h2v2h-2z`, fill: 'none', stroke: '#aaa' });
    rect(1265, y - 4, 8, 8, '#b8b8b8');
    line(`1267,${y - 2} 1271,${y + 2} 1269,${y} 1271,${y - 2} 1267,${y + 2}`, '#fff');
});

// axes
[[128, '50,000'], [207, '45,000'], [285, '40,000'], [364, '35,000'], [442, '30,000'], [521, '25,000']]
    .forEach(([y, t]) => label(1286, y, t));
label(1329, 669, '500,000', '#000', 'end');
label(1329, 694, '250,000', '#000', 'end');
label(1329, 715, '0', '#000', 'end');
label(1323, 748, '0', '#000', 'end');
label(1323, 771, '-2,500', '#000', 'end');
label(1286, 804, '0');
[[167, '02'], [253, '03'], [406, '04'], [558, '05'], [710, '06'], [855, '07'], [1007, '08'], [1167, '09']]
    .forEach(([x, t]) => label(x, 821, t));

rect(1272, 497, 3, 96, '#d00010');
rect(1272, 593, 3, 51, '#0000b0');
rect(1284, 579, 43, 28, '#f00008');
label(1326, 605, '(1.73%)', '#fff', 'end');
add('path', { d: 'M1275 587l6-5v10z', fill: '#d00010' });
label(1285, 591, '20,550', '#fff');
[[557, '22,007'], [597, '19,450']].forEach(([y, t]) => {
    add('rect', { x: 1275.5, y: y + 0.5, width: 41, height: 14, fill: '#e8ffe4', stroke: '#000' });
    label(1278, y + 12, t);
});
```
